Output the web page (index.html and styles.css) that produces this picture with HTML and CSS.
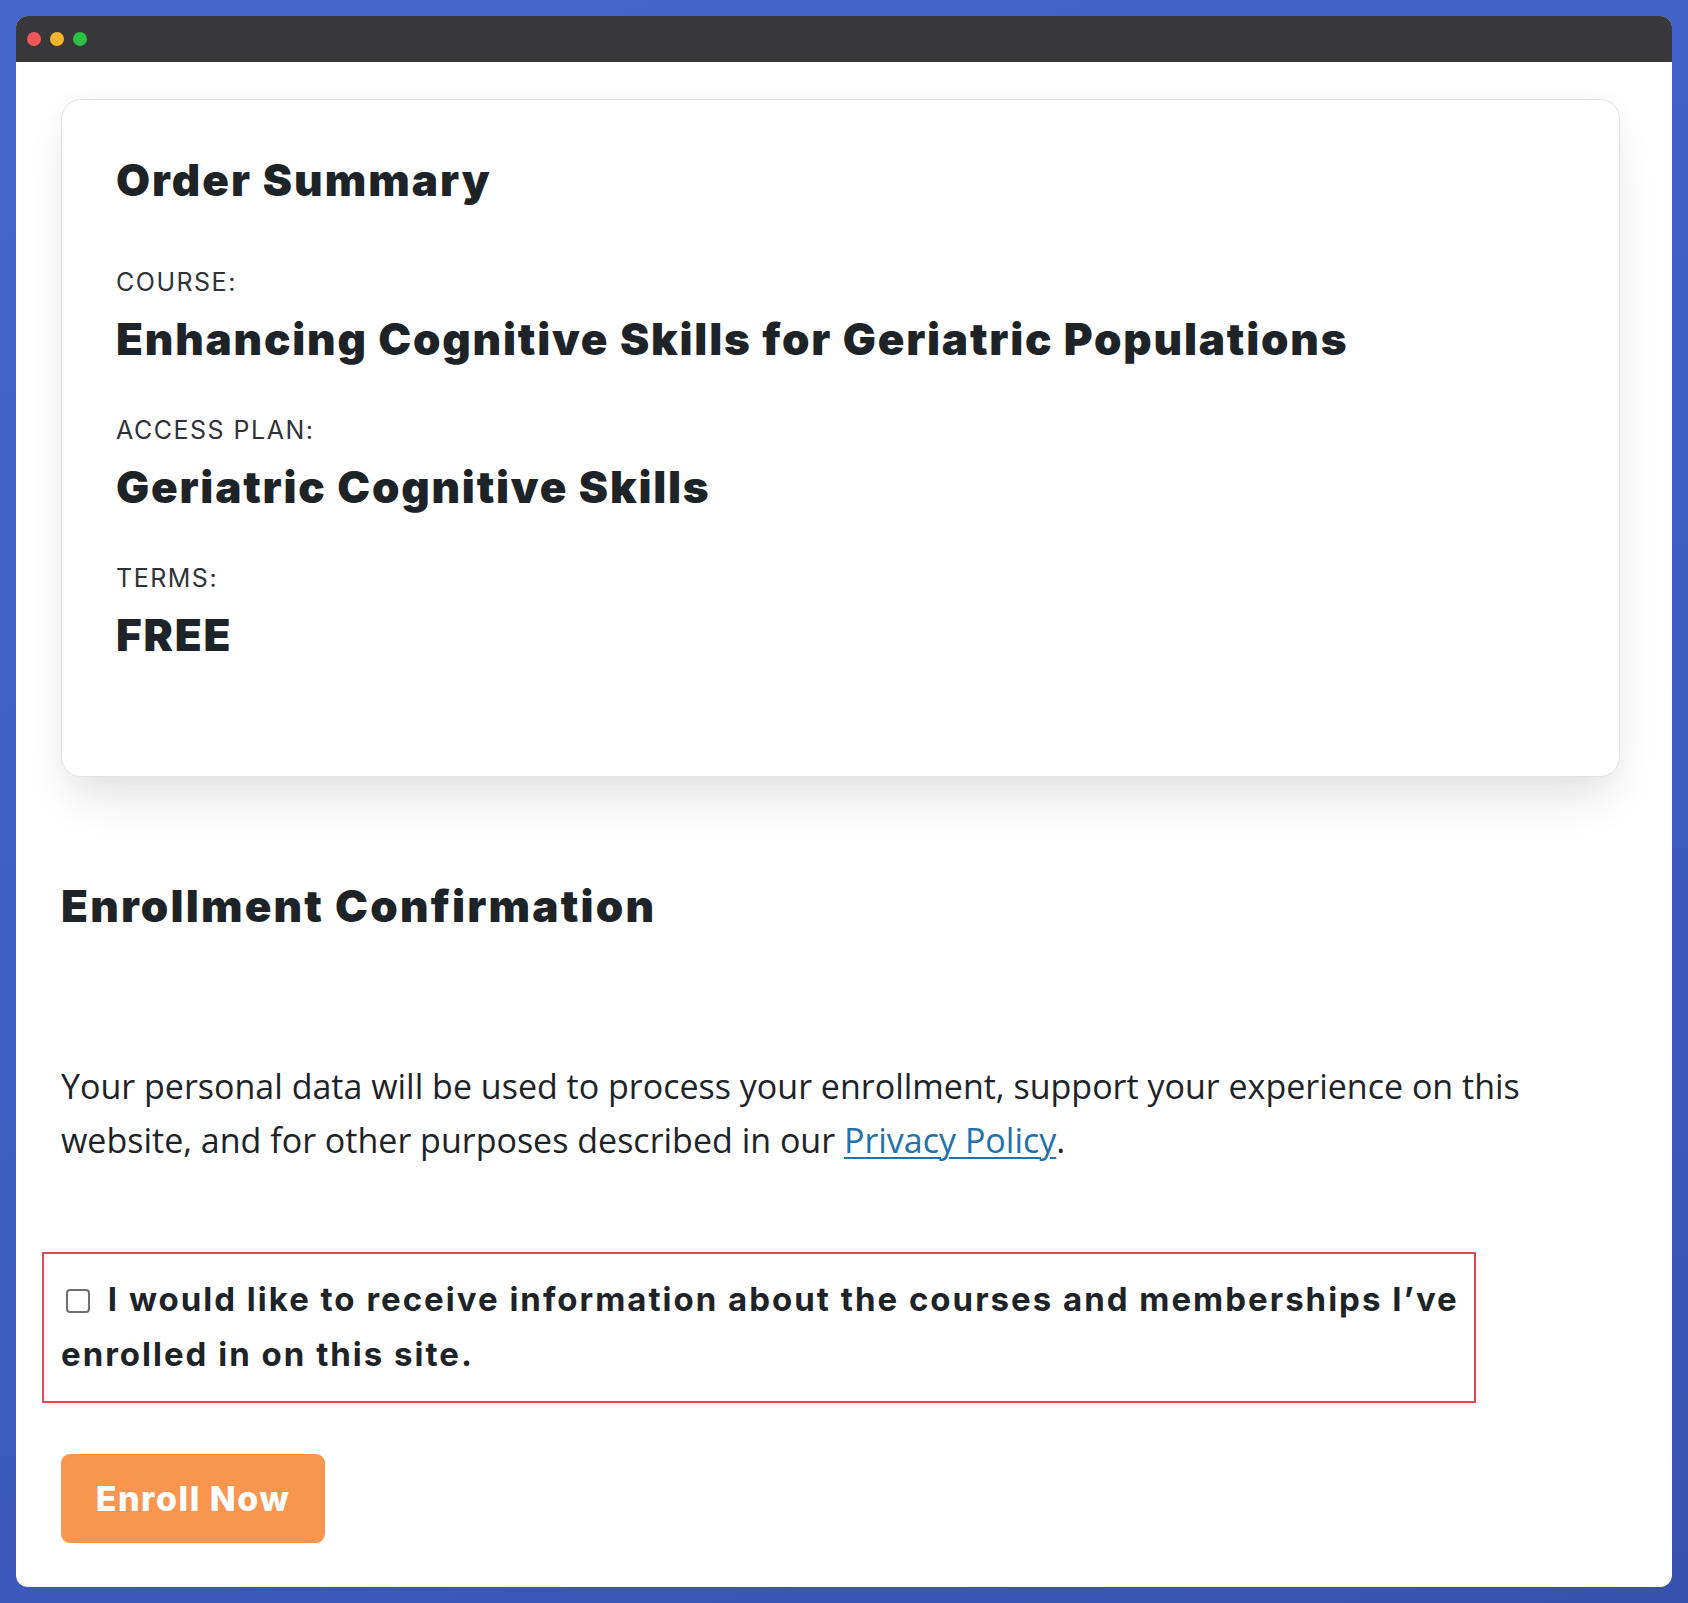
FILE: index.html
```html
<!DOCTYPE html>
<html lang="en">
<head>
<meta charset="utf-8">
<title>Order Summary</title>
<link rel="stylesheet" href="styles.css">
</head>
<body>
<div class="window">
  <div class="titlebar">
    <span class="dot dot-red"></span>
    <span class="dot dot-yellow"></span>
    <span class="dot dot-green"></span>
  </div>
  <div class="page">
    <section class="card">
      <h2 class="card-title">Order Summary</h2>
      <div class="field">
        <div class="label">COURSE:</div>
        <div class="value">Enhancing Cognitive Skills for Geriatric Populations</div>
      </div>
      <div class="field">
        <div class="label">ACCESS PLAN:</div>
        <div class="value">Geriatric Cognitive Skills</div>
      </div>
      <div class="field">
        <div class="label">TERMS:</div>
        <div class="value">FREE</div>
      </div>
    </section>

    <h2 class="section-title">Enrollment Confirmation</h2>

    <p class="privacy">Your personal data will be used to process your enrollment, support your experience on this website, and for other purposes described in our <a href="#" class="link">Privacy Policy</a>.</p>

    <div class="highlight">
      <label class="consent"><input type="checkbox" class="check"> I would like to receive information about the courses and memberships I’ve enrolled in on this site.</label>
    </div>

    <button class="enroll" type="button">Enroll Now</button>
  </div>
</div>
</body>
</html>
```

FILE: styles.css
```css
* { box-sizing: border-box; }

html, body {
  margin: 0;
  padding: 0;
}

body {
  background: linear-gradient(160deg, #4465cc 0%, #3d5ec4 50%, #3853ae 100%);
  padding: 16px;
  min-height: 1603px;
  font-family: "Inter", "Noto Sans", sans-serif;
  color: #1d2327;
}

.window {
  background: #ffffff;
  border-radius: 12px;
  overflow: hidden;
  height: 1571px;
}

.titlebar {
  height: 46px;
  background: #38383b;
  display: flex;
  align-items: center;
  gap: 9px;
  padding-left: 11px;
}

.dot {
  width: 14px;
  height: 14px;
  border-radius: 50%;
  display: block;
}
.dot-red { background: #f0565a; }
.dot-yellow { background: #f5b429; }
.dot-green { background: #2ac145; }

.page {
  padding: 37px 52px 0 45px;
}

.card {
  border: 1.5px solid #e3e3e3;
  border-radius: 20px;
  height: 678px;
  padding: 55px 54px 0 54px;
  box-shadow: 0 28px 45px -8px rgba(0, 0, 0, 0.11), 0 0 22px rgba(0, 0, 0, 0.03);
  background: #fff;
}

.card-title,
.section-title {
  font-family: "Inter", sans-serif;
  font-weight: 900;
  font-size: 44px;
  line-height: 50px;
  letter-spacing: 2px;
  margin: 0;
  color: #1d2327;
}

.card-title {
  margin-bottom: 62px;
}

.field + .field {
  margin-top: 52px;
}

.label {
  font-family: "Inter", sans-serif;
  font-weight: 400;
  font-size: 25px;
  line-height: 30px;
  letter-spacing: 1.5px;
  color: #2f3337;
}

.value {
  margin-top: 18px;
  font-family: "Inter", sans-serif;
  font-weight: 900;
  font-size: 44px;
  line-height: 48px;
  letter-spacing: 1.8px;
  color: #1d2327;
}

.section-title {
  margin-top: 104px;
  letter-spacing: 2.2px;
}

.privacy {
  margin: 128px 0 0 0;
  font-family: "Open Sans", "Noto Sans", sans-serif;
  font-size: 34px;
  line-height: 54px;
  color: #1d2327;
}

.link {
  color: #2271a8;
  text-decoration: underline;
  text-decoration-thickness: 2px;
  text-underline-offset: 4px;
}

.highlight {
  margin-top: 85px;
  margin-left: -19px;
  width: 1434px;
  border: 2px solid #e04a4c;
  padding: 18px 0 19px 17px;
}

.consent {
  display: block;
  font-family: "Inter", sans-serif;
  font-weight: 700;
  font-size: 33px;
  line-height: 55px;
  letter-spacing: 2px;
  color: #1d2327;
}

.check {
  appearance: none;
  -webkit-appearance: none;
  width: 24px;
  height: 24px;
  border: 2px solid #707070;
  border-radius: 4px;
  margin: 0 8px 0 5px;
  vertical-align: -2px;
  background: #fff;
}

.enroll {
  margin-top: 51px;
  display: block;
  width: 264px;
  height: 89px;
  border: none;
  border-radius: 9px;
  background: #fa954f;
  color: #fff;
  font-family: "Inter", sans-serif;
  font-weight: 800;
  font-size: 34px;
  letter-spacing: 1.5px;
  padding: 0;
}
```
